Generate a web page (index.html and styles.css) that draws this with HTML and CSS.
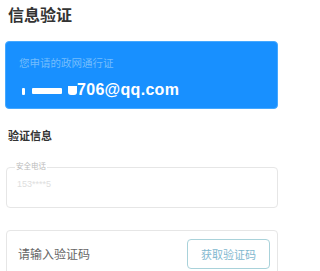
FILE: index.html
```html
<!DOCTYPE html>
<html lang="zh">
<head>
<meta charset="utf-8">
<link rel="stylesheet" href="styles.css">
</head>
<body>
<div class="page">
  <h1 class="title">信息验证</h1>
  <div class="card">
    <div class="card-sub">您申请的政网通行证</div>
    <div class="card-mail"><span class="mask m1"></span><span class="mask m2"></span><span class="mask m3"></span>706@qq.com</div>
  </div>
  <div class="section">验证信息</div>
  <fieldset class="field">
    <legend class="legend">安全电话</legend>
    <div class="value">153****5</div>
  </fieldset>
  <div class="field code">
    <span class="placeholder">请输入验证码</span>
    <span class="btn">获取验证码</span>
  </div>
</div>
</body>
</html>
```
FILE: styles.css
```css
html, body {
  margin: 0;
  padding: 0;
  background: #fff;
}
body {
  font-family: "Liberation Sans", "Noto Sans CJK SC", sans-serif;
  overflow: hidden;
}
.page {
  width: 284px;
  box-sizing: border-box;
  display: flex;
  flex-direction: column;
  padding: 0 6px 0 5px;
}
.title {
  margin: 0;
  padding: 6px 0 0 3px;
  font-size: 16px;
  line-height: 20px;
  font-weight: bold;
  color: #333;
}
.card {
  margin-top: 15px;
  height: 68px;
  box-sizing: border-box;
  background: #1890ff;
  border: 1px solid #45a8ff;
  border-radius: 4px;
  padding: 14px 0 0 13px;
  display: flex;
  flex-direction: column;
}
.card-sub {
  font-size: 10.5px;
  line-height: 14px;
  color: #74bdfd;
}
.card-mail {
  margin-top: 10px;
  font-size: 16px;
  line-height: 20px;
  font-weight: bold;
  color: #fff;
  letter-spacing: 0.3px;
  display: flex;
  align-items: center;
}
.mask {
  display: inline-block;
  background: #fff;
  border-radius: 1px;
}
.m1 { width: 3px; height: 7px; margin: 3px 7px 0 3px; }
.m2 { width: 30px; height: 6px; margin-right: 6px; margin-top: 2px; }
.m3 { width: 9px; height: 9px; margin-right: 0; border-radius: 0 0 3px 3px; }
.section {
  margin-top: 20px;
  padding-left: 3px;
  font-size: 11px;
  line-height: 14px;
  font-weight: bold;
  color: #333;
}
.field {
  margin: 0;
  box-sizing: border-box;
  border: 1px solid #e6e6e6;
  border-radius: 4px;
}
fieldset.field {
  margin-top: 20px;
  margin-left: 1px;
  height: 45px;
  padding: 0 10px;
}
.legend {
  padding: 0 1px;
  margin-left: -2px;
  font-size: 7.5px;
  line-height: 8px;
  color: #bbb;
}
.value {
  margin-top: 8px;
  font-size: 9px;
  color: #dedede;
}
.code {
  margin-top: 22px;
  margin-left: 1px;
  height: 50px;
  padding: 8px 7px 0 11px;
  display: flex;
  justify-content: space-between;
  align-items: flex-start;
}
.placeholder {
  margin-top: 8px;
  font-size: 12px;
  line-height: 16px;
  color: #666;
}
.btn {
  width: 83px;
  height: 30px;
  box-sizing: border-box;
  border: 1px solid #a9d2da;
  border-radius: 4px;
  display: flex;
  align-items: center;
  justify-content: center;
  font-size: 11px;
  color: #82b8cf;
}
```
